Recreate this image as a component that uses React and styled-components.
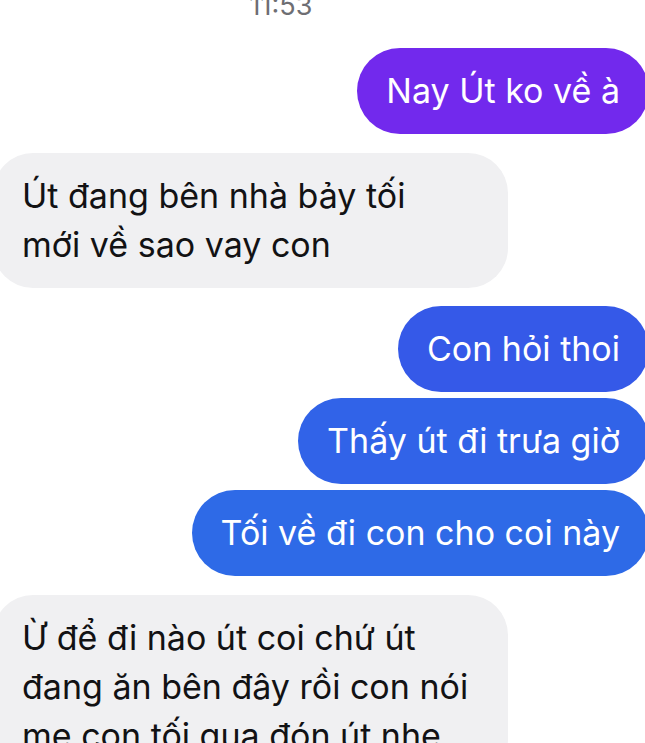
import styled, { createGlobalStyle } from 'styled-components';

const GlobalStyle = createGlobalStyle`
  html, body {
    margin: 0;
    padding: 0;
    background: #ffffff;
    overflow: hidden;
  }
  body {
    font-family: Inter, 'Noto Sans', sans-serif;
    -webkit-font-smoothing: antialiased;
  }
`;

const Thread = styled.div`
  display: flex;
  flex-direction: column;
  width: 645px;
  height: 743px;
  overflow: hidden;
`;

const Time = styled.div`
  margin-top: -9px;
  text-align: center;
  padding-right: 83px;
  font-size: 27px;
  line-height: 30px;
  color: #6e6e73;
`;

const Row = styled.div`
  display: flex;
  justify-content: ${({ $mine }) => ($mine ? 'flex-end' : 'flex-start')};
  margin-top: ${({ $gap }) => $gap}px;
  margin-right: ${({ $mine }) => ($mine ? '-4px' : '0')};
  margin-left: ${({ $mine }) => ($mine ? '0' : '-7px')};
`;

const Bubble = styled.div`
  box-sizing: border-box;
  width: ${({ $multi }) => ($multi ? '515px' : 'auto')};
  padding: 18px 29px 19px;
  border-radius: ${({ $multi }) => ($multi ? '40px' : '43px')};
  background: ${({ $bg }) => $bg};
  color: ${({ $mine }) => ($mine ? '#ffffff' : '#121214')};
  font-size: 34px;
  line-height: 49px;
  white-space: nowrap;
`;

const Line = styled.div``;

const messages = [
  { lines: ['Nay Út ko về à'], mine: true, bg: '#7229ed', gap: 27 },
  {
    lines: ['Út đang bên nhà bảy tối', 'mới về sao vay con'],
    mine: false,
    bg: '#f0f0f2',
    gap: 19,
  },
  { lines: ['Con hỏi thoi'], mine: true, bg: '#3559e8', gap: 18 },
  { lines: ['Thấy út đi trưa giờ'], mine: true, bg: '#3163e8', gap: 6 },
  { lines: ['Tối về đi con cho coi này'], mine: true, bg: '#2e6ae7', gap: 6 },
  {
    lines: ['Ừ để đi nào út coi chứ út', 'đang ăn bên đây rồi con nói', 'me con tối qua đón út nhe'],
    mine: false,
    bg: '#f0f0f2',
    gap: 19,
  },
];

function App() {
  return (
    <>
      <GlobalStyle />
      <Thread>
        <Time>11:53</Time>
        {messages.map((m, i) => (
          <Row key={i} $mine={m.mine} $gap={m.gap}>
            <Bubble $mine={m.mine} $bg={m.bg} $multi={m.lines.length > 1}>
              {m.lines.map((l, j) => (
                <Line key={j}>{l}</Line>
              ))}
            </Bubble>
          </Row>
        ))}
      </Thread>
    </>
  );
}

export default App;
